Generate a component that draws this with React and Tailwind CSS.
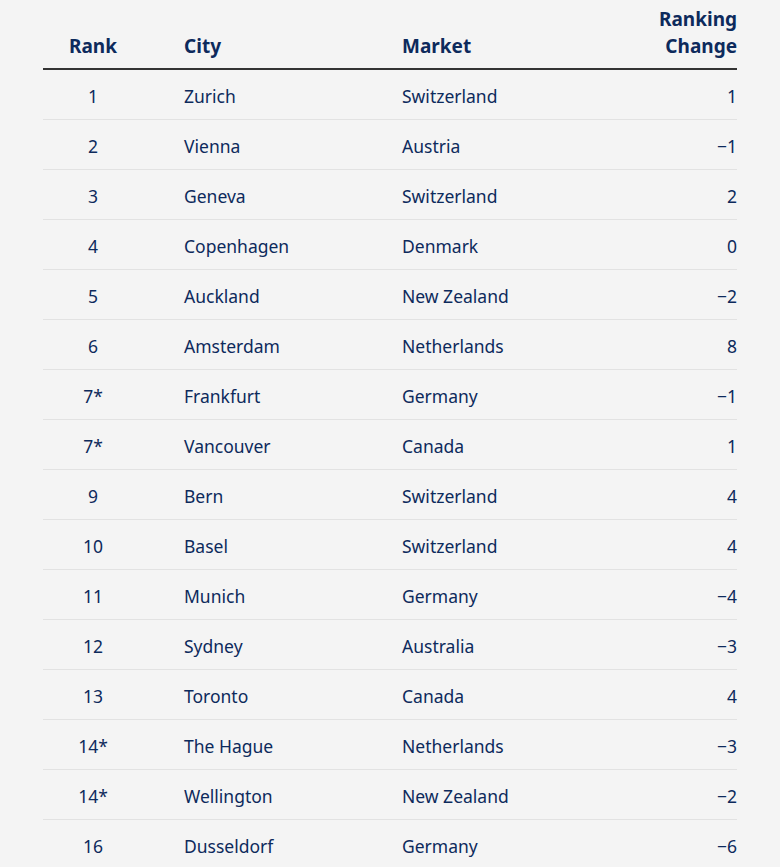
const rows = [
  ['1', 'Zurich', 'Switzerland', '1'],
  ['2', 'Vienna', 'Austria', '\u22121'],
  ['3', 'Geneva', 'Switzerland', '2'],
  ['4', 'Copenhagen', 'Denmark', '0'],
  ['5', 'Auckland', 'New Zealand', '\u22122'],
  ['6', 'Amsterdam', 'Netherlands', '8'],
  ['7*', 'Frankfurt', 'Germany', '\u22121'],
  ['7*', 'Vancouver', 'Canada', '1'],
  ['9', 'Bern', 'Switzerland', '4'],
  ['10', 'Basel', 'Switzerland', '4'],
  ['11', 'Munich', 'Germany', '\u22124'],
  ['12', 'Sydney', 'Australia', '\u22123'],
  ['13', 'Toronto', 'Canada', '4'],
  ['14*', 'The Hague', 'Netherlands', '\u22123'],
  ['14*', 'Wellington', 'New Zealand', '\u22122'],
  ['16', 'Dusseldorf', 'Germany', '\u22126'],
]

export default function App() {
  return (
    <div className="min-h-screen bg-[#f4f4f4] text-[#0d2a5c] font-['Noto_Sans',sans-serif]">
      <div className="ml-[43px] w-[694px]">
        {/* Header */}
        <div className="flex items-end pt-[6px] pb-[8px] border-b-2 border-[#333333] text-[19px] leading-[27px] font-bold">
          <div className="w-[100px] text-center">Rank</div>
          <div className="w-[259px] pl-[41px]">City</div>
          <div className="flex-1">Market</div>
          <div className="text-right">Ranking<br />Change</div>
        </div>

        {/* Rows */}
        {rows.map((r, i) => (
          <div key={i} className="flex items-center h-[50px] pt-[3px] border-b border-[#e2e2e2] text-[17.5px]">
            <div className="w-[100px] text-center">{r[0]}</div>
            <div className="w-[259px] pl-[41px]">{r[1]}</div>
            <div className="flex-1">{r[2]}</div>
            <div className="text-right">{r[3]}</div>
          </div>
        ))}
      </div>
    </div>
  )
}
